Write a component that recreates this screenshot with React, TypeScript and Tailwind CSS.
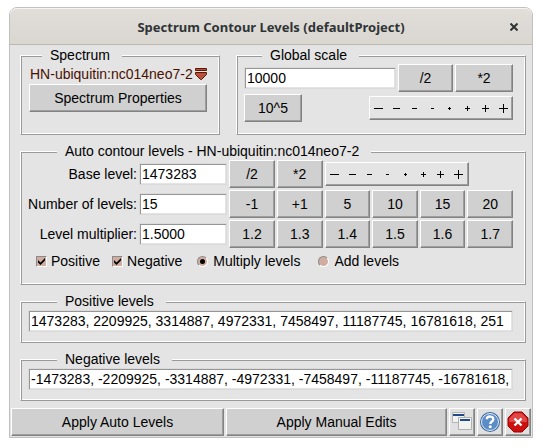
import type { ReactNode } from "react";

const raised =
  "border border-t-white border-l-white border-r-[#828282] border-b-[#828282] shadow-[inset_-1px_-1px_0_#9e9e9e]";

function Group({ title, indent, children }: { title: string; indent: string; children: ReactNode }) {
  return (
    <fieldset className="min-w-0 border border-t-white border-l-white border-r-[#9a9a9a] border-b-[#9a9a9a] pr-3 pb-2.5 pl-[7px] shadow-[inset_1px_1px_0_#9a9a9a,inset_-1px_-1px_0_#fff]">
      <legend className={`${indent} bg-[#e4e4e4] pr-3 pl-2 leading-[18px]`}>{title}</legend>
      {children}
    </fieldset>
  );
}

function Button({ children, className = "" }: { children: ReactNode; className?: string }) {
  return (
    <button type="button" className={`h-7 bg-[#d0d0d0] text-center ${raised} ${className}`}>
      {children}
    </button>
  );
}

function Entry({ id, label, value, className = "" }: { id?: string; label?: string; value: string; className?: string }) {
  return (
    <input
      id={id}
      aria-label={label}
      type="text"
      defaultValue={value}
      className={`h-[22px] min-w-0 rounded-none border border-[#dadada] bg-white px-0.5 shadow-[inset_1px_1px_0_#969696,inset_-1px_-1px_0_#e4e4e4] outline-none ${className}`}
    />
  );
}

const steps = [
  { name: "Decrease by 4", size: 9, plus: false },
  { name: "Decrease by 3", size: 7, plus: false },
  { name: "Decrease by 2", size: 5, plus: false },
  { name: "Decrease by 1", size: 3, plus: false },
  { name: "Reset", size: 3, plus: true },
  { name: "Increase by 1", size: 5, plus: true },
  { name: "Increase by 2", size: 7, plus: true },
  { name: "Increase by 3", size: 9, plus: true },
];

function StepBar({ className = "" }: { className?: string }) {
  return (
    <div className={`flex h-6 w-36 ${raised} ${className}`}>
      {steps.map((s) => {
        const start = (9 - s.size) / 2;
        return (
          <button key={s.name} type="button" aria-label={s.name} className="flex flex-1 items-center justify-center">
            <svg width="9" height="9" shapeRendering="crispEdges" aria-hidden="true">
              <rect x={start} y="4" width={s.size} height="1" />
              {s.plus && <rect x="4" y={start} width="1" height={s.size} />}
            </svg>
          </button>
        );
      })}
    </div>
  );
}

function Check({ label }: { label: string }) {
  return (
    <label className="flex items-center gap-1">
      <span className="relative flex">
        <input
          type="checkbox"
          defaultChecked
          className="peer size-[11px] appearance-none border border-t-[#8a8a8a] border-r-white border-b-white border-l-[#8a8a8a] bg-[#d0ada0]"
        />
        <svg className="pointer-events-none absolute inset-0 hidden peer-checked:block" width="11" height="11" aria-hidden="true">
          <path d="M2 4l2.500 2.500L9 2v2.500L4.500 9 2 6.500z" />
        </svg>
      </span>
      {label}
    </label>
  );
}

function Radio({ label, checked }: { label: string; checked?: boolean }) {
  return (
    <label className="flex items-center gap-[5px]">
      <span className="relative flex">
        <input
          type="radio"
          name="mode"
          defaultChecked={checked}
          className="peer size-[11px] appearance-none rounded-full border border-t-[#8a8a8a] border-r-white border-b-white border-l-[#8a8a8a] bg-[#d0ada0]"
        />
        <span className="pointer-events-none absolute inset-[3px] hidden rounded-full bg-black peer-checked:block" />
      </span>
      {label}
    </label>
  );
}

function IconButton({ label, children }: { label: string; children: ReactNode }) {
  return (
    <button type="button" aria-label={label} className={`flex h-7 w-[26px] shrink-0 items-center justify-center bg-[#e0e0e0] ${raised}`}>
      {children}
    </button>
  );
}

const rows = [
  { id: "count", label: "Number of levels:", value: "15", options: ["-1", "+1", "5", "10", "15", "20"] },
  { id: "multiplier", label: "Level multiplier:", value: "1.5000", options: ["1.2", "1.3", "1.4", "1.5", "1.6", "1.7"] },
];

export default function App() {
  return (
    <div className="bg-white px-[9px] pt-[7px] pb-[9px] font-['Liberation_Sans',Arial,sans-serif] text-[14px] leading-4 text-black">
      <div className="rounded-t-lg border border-[#c0c0c0] bg-[#e4e4e4]">
        <header className="relative flex h-[37px] items-center justify-center rounded-t-[7px] border-b border-[#bfb8b0] bg-linear-to-b from-[#e1deda] to-[#dad6d0] pt-px shadow-[inset_0_1px_0_#f5f4f2]">
          <h1 className="font-['Noto_Sans',sans-serif] text-[13px] font-bold text-[#2e3436]">
            Spectrum Contour Levels (defaultProject)
          </h1>
          <button type="button" aria-label="Close" className="absolute right-[14px] flex size-2">
            <svg width="8" height="8" viewBox="0 0 8 8" aria-hidden="true">
              <path d="M.5.5l7 7M7.500.5l-7 7" stroke="#2e3436" strokeWidth="2" />
            </svg>
          </button>
        </header>

        <main className="flex flex-col gap-[7px] pt-px pr-1.5 pb-[7px] pl-2.5">
          <div className="grid grid-cols-[20fr_29fr] gap-4">
            <Group title="Spectrum" indent="ml-[14px]">
              <button type="button" className="flex h-5 items-center gap-0.5 pl-0.5 whitespace-nowrap text-[#4a1000]">
                HN-ubiquitin:nc014neo7-2
                <svg className="shrink-0" width="12" height="13" viewBox="0 0 12 13" aria-hidden="true">
                  <path d="M.5.5h11v2H.5zM.5 4.500h11v2l-5 5h-1l-5-5z" fill="#b85040" stroke="#5a1800" />
                </svg>
              </button>
              <div className="grid pl-px">
                <Button>Spectrum Properties</Button>
              </div>
            </Group>
            <Group title="Global scale" indent="ml-[18px]">
              <div className="flex flex-col gap-0.5 pb-0.5">
                <div className="flex items-center gap-0.5">
                  <Entry label="Global scale" value="10000" className="w-0 flex-1" />
                  <Button className="w-[55px]">/2</Button>
                  <Button className="w-[58px]">*2</Button>
                </div>
                <div className="flex items-center justify-between">
                  <Button className="w-[58px]">10^5</Button>
                  <StepBar />
                </div>
              </div>
            </Group>
          </div>

          <Group title="Auto contour levels - HN-ubiquitin:nc014neo7-2" indent="ml-[29px]">
            <div className="grid grid-cols-[109px_89fr_repeat(6,46fr)] items-center gap-0.5">
              <label htmlFor="base" className="text-right">Base level:</label>
              <Entry id="base" value="1473283" className="w-full" />
              <Button>/2</Button>
              <Button>*2</Button>
              <StepBar className="col-span-4" />
              {rows.map((row) => (
                <div key={row.id} className="contents">
                  <label htmlFor={row.id} className="text-right">{row.label}</label>
                  <Entry id={row.id} value={row.value} className="w-full" />
                  {row.options.map((o) => (
                    <Button key={o}>{o}</Button>
                  ))}
                </div>
              ))}
            </div>
            <div className="flex h-[26px] items-center gap-3 pl-2">
              <Check label="Positive" />
              <Check label="Negative" />
              <div className="flex gap-[18px] pl-[3px]">
                <Radio label="Multiply levels" checked />
                <Radio label="Add levels" />
              </div>
            </div>
          </Group>

          <Group title="Positive levels" indent="ml-[29px]">
            <Entry
              label="Positive levels"
              value="1473283, 2209925, 3314887, 4972331, 7458497, 11187745, 16781618, 251"
              className="block w-full"
            />
          </Group>

          <Group title="Negative levels" indent="ml-[29px]">
            <Entry
              label="Negative levels"
              value="-1473283, -2209925, -3314887, -4972331, -7458497, -11187745, -16781618,"
              className="block w-full"
            />
          </Group>
        </main>

        <footer className="flex gap-0.5 px-px pb-px">
          <Button className="flex-[213]">Apply Auto Levels</Button>
          <Button className="flex-[221]">Apply Manual Edits</Button>
          <IconButton label="Clone window">
            <svg width="22" height="22" viewBox="0 0 22 22" aria-hidden="true">
              <path d="M1.500 1.500h12v10h-12z" fill="#f2f2f2" stroke="#b4b6b2" />
              <path d="M2 3h11v2H2z" fill="#204a87" />
              <path d="M7.500 6.500h13v12h-13z" fill="#f2f2f2" stroke="#b0b2ae" />
              <path d="M9 8h10v2H9z" fill="#204a87" />
            </svg>
          </IconButton>
          <IconButton label="Help">
            <svg width="22" height="22" viewBox="0 0 22 22" aria-hidden="true">
              <circle cx="11" cy="11" r="10" fill="#3465a4" />
              <circle cx="11" cy="11" r="8.500" fill="#5c8cc6" stroke="#e4edf7" />
              <path d="M7.800 8.200C8 4.600 14.300 4.800 14.300 8.200c0 2.300-3 2.400-3 4.800" fill="none" stroke="#fff" strokeWidth="2.400" />
              <circle cx="11.200" cy="15.800" r="1.500" fill="#fff" />
            </svg>
          </IconButton>
          <IconButton label="Close window">
            <svg width="22" height="22" viewBox="0 0 22 22" aria-hidden="true">
              <path d="M7 1h8l6 6v8l-6 6H7l-6-6V7z" fill="#cc1010" stroke="#9c0000" />
              <path d="M7.400 2.200h7.200l5.200 5.200V11H2.200V7.400z" fill="#e04848" />
              <path d="M7.500 7.500l7 7M14.500 7.500l-7 7" stroke="#fff" strokeWidth="2.400" />
            </svg>
          </IconButton>
        </footer>
      </div>
    </div>
  );
}
